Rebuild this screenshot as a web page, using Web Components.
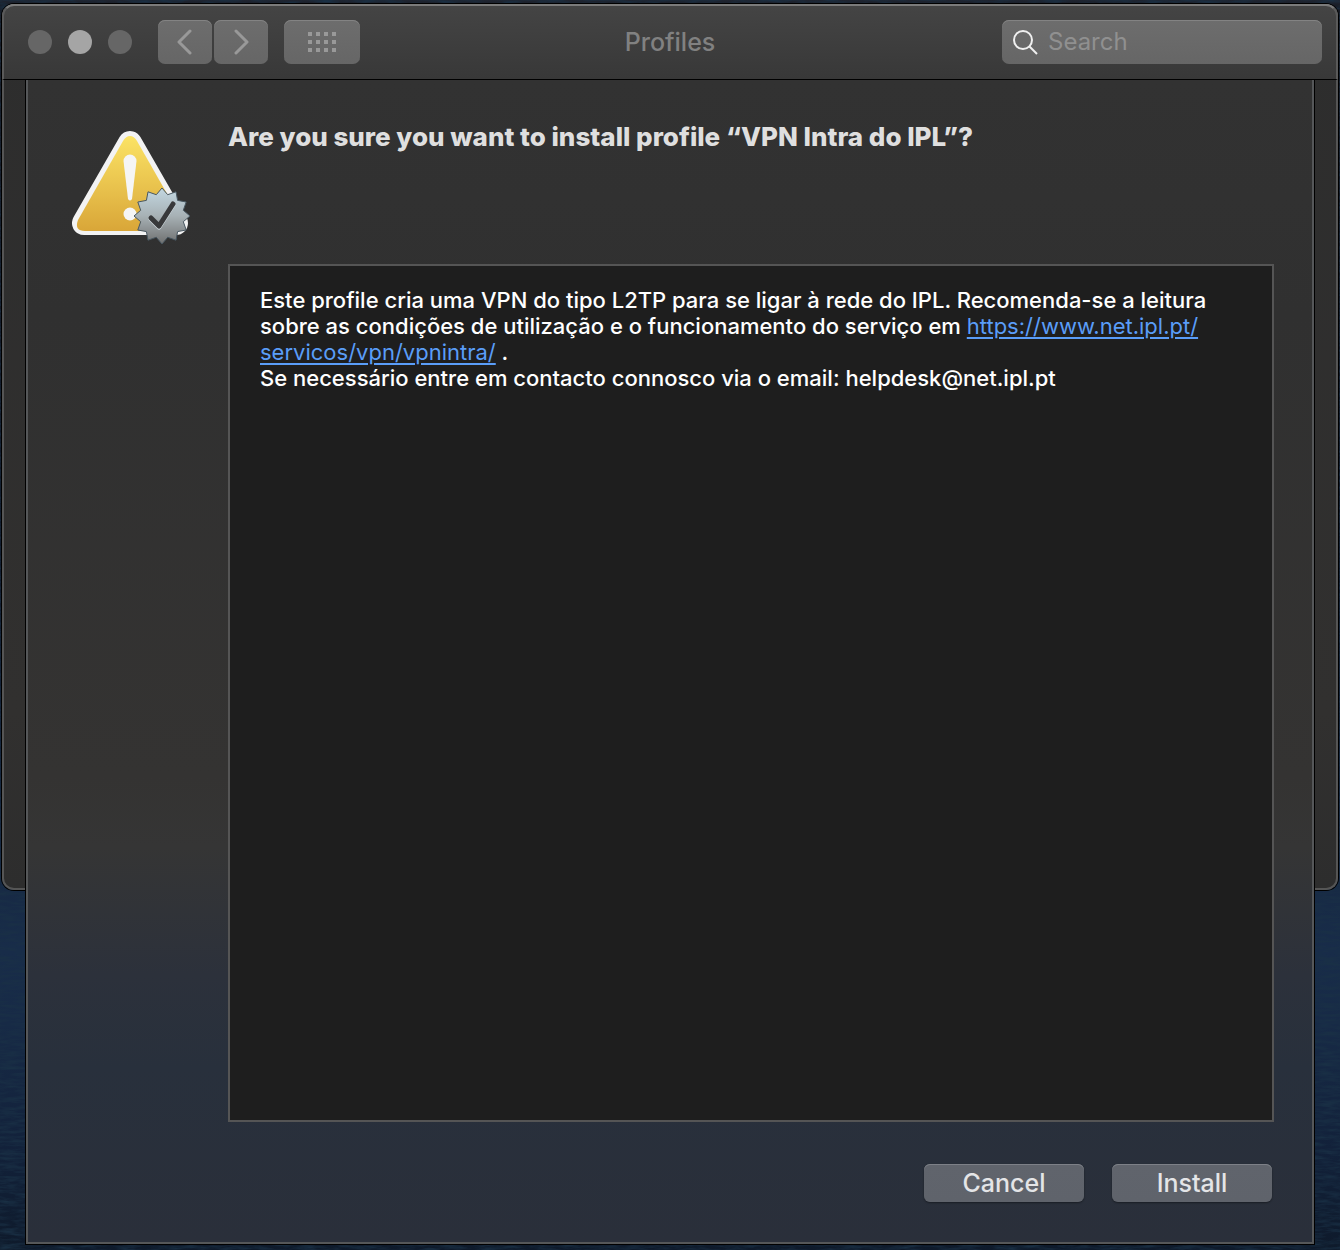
<!DOCTYPE html>
<html lang="en">
<head>
<meta charset="utf-8">
<meta name="viewport" content="width=device-width, initial-scale=1">
<title>Profiles</title>
<style>
  body {
    margin: 0;
    background: #0d1a2e;
    font-family: Inter, "Liberation Sans", sans-serif;
  }
</style>
</head>
<body>
<mac-desktop>
  <title-bar slot="titlebar" heading="Profiles"></title-bar>
  <profile-sheet slot="sheet">
    <alert-icon slot="icon"></alert-icon>
    <span slot="heading">Are you sure you want to install profile “VPN Intra do IPL”?</span>
    <profile-description slot="body"></profile-description>
    <push-button slot="actions">Cancel</push-button>
    <push-button slot="actions">Install</push-button>
  </profile-sheet>
</mac-desktop>

<script>
class MacDesktop extends HTMLElement {
  constructor() {
    super();
    this.attachShadow({ mode: "open" });
    // the sheet hangs below the window, so both share the middle row
    this.shadowRoot.innerHTML = `
    <style>
      :host {
        display: grid;
        grid-template-columns: 2px 24px minmax(0, 1fr) 24px 2px;
        grid-template-rows: 4px auto 1fr 354px 6px;
        min-height: 100vh;
        background: linear-gradient(#202531 0, #181c26 6px, #111a2a 40%, #182c49 76%, #172a46 82%, #12213a 92%, #0e1a2b 100%);
      }
      .texture {
        grid-area: 1 / 1 / -1 / -1;
        width: 100%;
        height: 0;
        min-height: 100%;
      }
      .window {
        grid-area: 2 / 2 / 4 / 5;
        background: linear-gradient(#2d2d2d, #31302f 80%, #2d2d2d);
        border: 2px solid #555;
        border-top-color: #7b7b7b;
        border-radius: 12px;
        box-shadow: 0 0 0 1px #000;
      }
      .titlebar {
        grid-area: 2 / 2 / 3 / 5;
        min-width: 0;
      }
      .sheet {
        grid-area: 3 / 3 / 5 / 4;
        display: grid;
      }
    </style>
    <svg class="texture" aria-hidden="true">
      <filter id="rock" x="0" y="0" width="100%" height="100%">
        <feTurbulence type="fractalNoise" baseFrequency="0.05 0.3" numOctaves="4" seed="7"/>
        <feColorMatrix values="0 0 0 0 0.01  0 0 0 0 0.03  0 0 0 0 0.06  2 0 0 0 -0.75"/>
      </filter>
      <rect width="100%" height="100%" filter="url(#rock)"/>
    </svg>
    <div class="window"></div>
    <div class="titlebar"><slot name="titlebar"></slot></div>
    <div class="sheet"><slot name="sheet"></slot></div>`;
  }
}

class TitleBar extends HTMLElement {
  constructor() {
    super();
    this.attachShadow({ mode: "open" });
    this.shadowRoot.innerHTML = `
    <style>
      :host {
        display: grid;
        grid-template-columns: 1fr auto 1fr;
        align-items: center;
        box-sizing: border-box;
        height: 76px;
        padding: 0 14px 2px;
        background: linear-gradient(#444, #383838);
        border: 2px solid #5a5a5a;
        border-top-color: #7b7b7b;
        border-bottom: 1px solid #000;
        border-radius: 12px 12px 0 0;
      }
      .left, .lights, .nav {
        display: flex;
        align-items: center;
      }
      .left {
        gap: 16px;
      }
      .lights {
        gap: 16px;
        margin: 0 10px;
      }
      .lights button {
        width: 24px;
        height: 24px;
        padding: 0;
        border: 0;
        border-radius: 50%;
        background: #666;
      }
      .lights .minimize {
        background: #a5a5a5;
      }
      .nav {
        gap: 2px;
      }
      .tool {
        display: flex;
        align-items: center;
        justify-content: center;
        width: 54px;
        height: 44px;
        padding: 0;
        border: 0;
        border-radius: 7px;
        background: linear-gradient(#6d6d6d, #666);
        box-shadow: inset 0 1px #838383;
        color: #999;
      }
      .tool.grid {
        width: 76px;
      }
      h1 {
        margin: 0;
        font-size: 25px;
        line-height: 32px;
        font-weight: 500;
        color: #818181;
      }
      .search {
        justify-self: end;
        display: flex;
        align-items: center;
        gap: 9px;
        box-sizing: border-box;
        width: 320px;
        max-width: 100%;
        height: 44px;
        padding: 0 10px;
        border-radius: 7px;
        background: linear-gradient(#6d6d6d, #666);
        box-shadow: inset 0 1px #838383;
      }
      .search svg {
        flex: none;
      }
      .search input {
        flex: 1;
        min-width: 0;
        padding: 0;
        border: 0;
        outline: 0;
        background: none;
        font: 400 24px/32px Inter, "Liberation Sans", sans-serif;
        color: #eee;
      }
      .search input::placeholder {
        color: #909090;
        opacity: 1;
      }
    </style>
    <div class="left">
      <div class="lights">
        <button aria-label="Close"></button>
        <button class="minimize" aria-label="Minimize"></button>
        <button aria-label="Zoom"></button>
      </div>
      <div class="nav">
        <button class="tool" aria-label="Back">
          <svg width="16" height="26" viewBox="0 0 16 26" fill="none" stroke="currentColor" stroke-width="3" stroke-linecap="round" stroke-linejoin="round"><path d="M13 2 2 13l11 11"/></svg>
        </button>
        <button class="tool" aria-label="Forward">
          <svg width="16" height="26" viewBox="0 0 16 26" fill="none" stroke="currentColor" stroke-width="3" stroke-linecap="round" stroke-linejoin="round"><path d="M3 2 14 13 3 24"/></svg>
        </button>
      </div>
      <button class="tool grid" aria-label="Show all">
        <svg width="28" height="20" viewBox="0 0 28 20" fill="none" stroke="currentColor" stroke-width="4" stroke-dasharray="4 4"><path d="M0 2h28M0 10h28M0 18h28"/></svg>
      </button>
    </div>
    <h1>${this.getAttribute("heading") ?? ""}</h1>
    <label class="search">
      <svg width="27" height="27" viewBox="0 0 27 27" fill="none" stroke="#f0f0f0" stroke-width="2"><circle cx="11" cy="12" r="9"/><path d="m17 18 8 8"/></svg>
      <input type="text" placeholder="Search" aria-label="Search">
    </label>`;
  }
}

class ProfileSheet extends HTMLElement {
  constructor() {
    super();
    this.attachShadow({ mode: "open" });
    this.shadowRoot.innerHTML = `
    <style>
      :host {
        display: grid;
        grid-template-columns: 128px minmax(0, 1fr);
        grid-template-rows: 184px 1fr auto;
        column-gap: 28px;
        box-sizing: border-box;
        padding: 0 38px 40px 44px;
        background: linear-gradient(#323232, #303030 20%, #343332 60%, #353535 66%, #2c313b 77%, #28303c 85%, #2a2f3a 100%);
        border: 2px solid #555759;
        border-top: 0;
        box-shadow: 0 0 0 1px #000;
        clip-path: inset(0 -1px -1px -1px);
      }
      h2 {
        margin: 0;
        padding-top: 40px;
        font-size: 26px;
        line-height: 34px;
        font-weight: 800;
        color: #dfdfdf;
      }
      .icon {
        padding-top: 48px;
      }
      .body {
        grid-column: 2;
        display: grid;
      }
      .actions {
        grid-column: 2;
        display: flex;
        justify-content: flex-end;
        gap: 28px;
        padding: 42px 2px 0 0;
      }
    </style>
    <div class="icon"><slot name="icon"></slot></div>
    <h2><slot name="heading"></slot></h2>
    <div class="body"><slot name="body"></slot></div>
    <div class="actions"><slot name="actions"></slot></div>`;
  }
}

class AlertIcon extends HTMLElement {
  constructor() {
    super();
    this.attachShadow({ mode: "open" });
    this.shadowRoot.innerHTML = `
    <style>
      :host {
        display: block;
      }
      svg {
        display: block;
      }
    </style>
    <svg width="122" height="120" viewBox="0 0 122 120" role="img" aria-label="Warning">
      <defs>
        <linearGradient id="yellow" x1="0" y1="0" x2="0" y2="1">
          <stop offset="0" stop-color="#fbe365"/>
          <stop offset="1" stop-color="#d9a638"/>
        </linearGradient>
        <linearGradient id="steel" x1="0" y1="0" x2="0" y2="1">
          <stop offset="0" stop-color="#c3d8e2"/>
          <stop offset="0.5" stop-color="#a7b1b5"/>
          <stop offset="1" stop-color="#6f7070"/>
        </linearGradient>
      </defs>
      <path d="M58 15 12 95h92z" fill="#f3f3f3" stroke="#f3f3f3" stroke-width="24" stroke-linejoin="round"/>
      <path d="M58 8Q62 8 65 13L110 92Q114 103 103 103H13Q2 103 6 92L51 13Q54 8 58 8z" fill="url(#yellow)"/>
      <path d="M51.500 33a6.500 6.500 0 0 1 13 0L60 71q-2 3-4 0z" fill="#f5f5f5"/>
      <circle cx="58" cy="86" r="6.500" fill="#f5f5f5"/>
      <polygon class="seal" fill="url(#steel)" stroke="#485761" stroke-width="1"/>
      <path d="m79 91 8 8 14-22" fill="none" stroke="#d2dce0" stroke-width="5" stroke-linecap="round" stroke-linejoin="round"/>
      <path d="m79 90 8 8 14-22" fill="none" stroke="#38393b" stroke-width="5" stroke-linecap="round" stroke-linejoin="round"/>
    </svg>`;
    this.drawSeal(90, 88, 28, 22, 12);
  }

  drawSeal(cx, cy, outer, inner, teeth) {
    const points = [];
    for (let i = 0; i < teeth * 2; i++) {
      const r = i % 2 ? inner : outer;
      const angle = (i * Math.PI) / teeth;
      points.push(`${(cx + r * Math.sin(angle)).toFixed(1)},${(cy - r * Math.cos(angle)).toFixed(1)}`);
    }
    this.shadowRoot.querySelector(".seal").setAttribute("points", points.join(" "));
  }
}

class ProfileDescription extends HTMLElement {
  constructor() {
    super();
    this.attachShadow({ mode: "open" });
    this.shadowRoot.innerHTML = `
    <style>
      :host {
        display: block;
        padding: 21px 30px;
        background: #1e1e1e;
        border: 2px solid #555;
        font-size: 22px;
        line-height: 26px;
        font-weight: 500;
        color: #fff;
      }
      p {
        margin: 0;
      }
      a {
        color: #5a9df8;
        font-weight: 400;
        text-underline-offset: 3px;
        text-decoration-thickness: 2px;
      }
    </style>
    <p>Este profile cria uma VPN do tipo L2TP para se ligar à rede do IPL. Recomenda-se a leitura sobre as condições de utilização e o funcionamento do serviço em <a href="https://www.net.ipl.pt/servicos/vpn/vpnintra/">https://www.net.ipl.pt/<wbr>servicos/vpn/vpnintra/</a> .</p>
    <p>Se necessário entre em contacto connosco via o email: helpdesk@net.ipl.pt</p>`;
  }
}

class PushButton extends HTMLElement {
  constructor() {
    super();
    this.attachShadow({ mode: "open" });
    this.shadowRoot.innerHTML = `
    <style>
      :host {
        display: block;
      }
      button {
        display: block;
        width: 160px;
        height: 38px;
        padding: 0;
        border: 0;
        border-radius: 6px;
        background: linear-gradient(#60646c, #5f636b);
        box-shadow: inset 0 1px #7d8087, 0 1px 2px rgba(0, 0, 0, 0.4);
        font: 500 25px/38px Inter, "Liberation Sans", sans-serif;
        color: #e4e5e7;
      }
    </style>
    <button type="button"><slot></slot></button>`;
  }
}

customElements.define("mac-desktop", MacDesktop);
customElements.define("title-bar", TitleBar);
customElements.define("profile-sheet", ProfileSheet);
customElements.define("alert-icon", AlertIcon);
customElements.define("profile-description", ProfileDescription);
customElements.define("push-button", PushButton);
</script>
</body>
</html>
